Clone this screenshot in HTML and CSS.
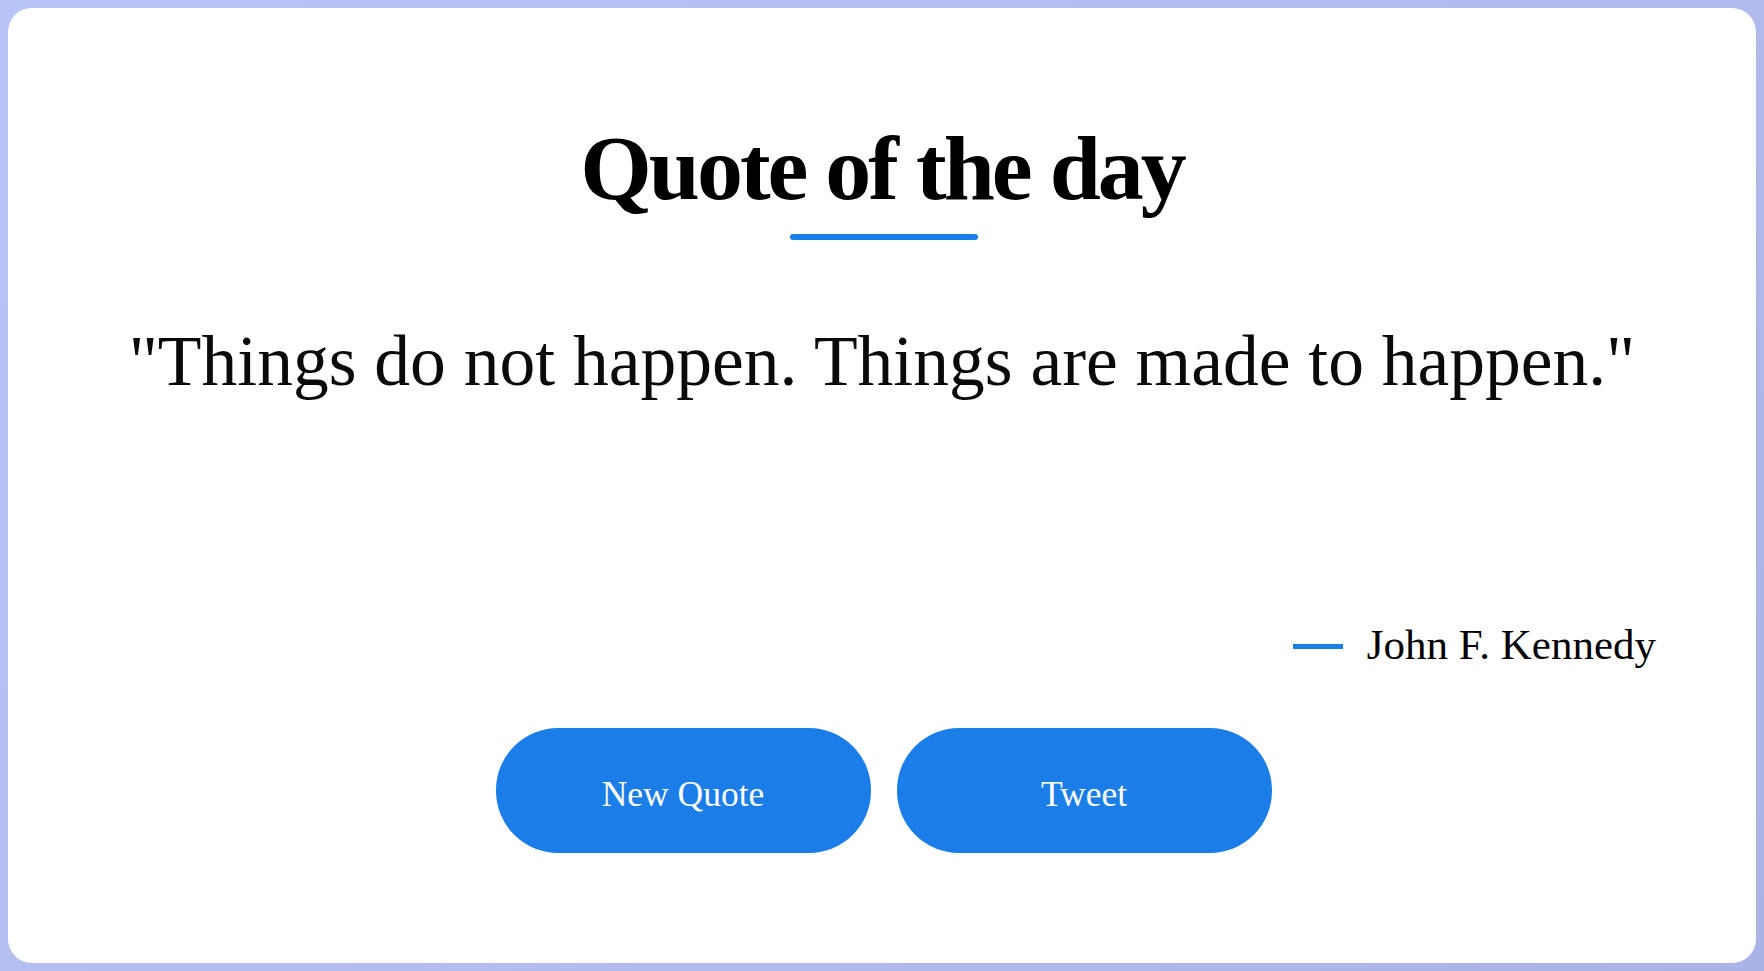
FILE: index.html
```html
<!DOCTYPE html>
<html lang="en">
<head>
<meta charset="utf-8">
<title>Quote of the day</title>
<link rel="stylesheet" href="styles.css">
</head>
<body>
<main class="card">
  <h1 class="title">Quote of the day</h1>
  <div class="rule"></div>
  <p class="quote">"Things do not happen. Things are made to happen."</p>
  <div class="author"><span class="dash"></span><span class="name">John F. Kennedy</span></div>
  <div class="actions">
    <button class="btn">New Quote</button>
    <button class="btn">Tweet</button>
  </div>
</main>
</body>
</html>
```

FILE: styles.css
```css
* { box-sizing: border-box; }
html {
  height: 100%;
  background: linear-gradient(135deg, #bac5f7 0%, #b2bcef 50%, #a9b3e5 100%);
}
body {
  margin: 8px;
  height: calc(100vh - 16px);
  font-family: "Liberation Serif", "Times New Roman", serif;
  color: #000;
}
.card {
  height: 100%;
  background: #fff;
  border-radius: 24px;
  padding: 114px 100px 0;
  display: flex;
  flex-direction: column;
  align-items: center;
}
.title {
  margin: 0;
  font-size: 92px;
  line-height: 92px;
  font-weight: 700;
  letter-spacing: -3px;
}
.rule {
  margin-top: 20px;
  margin-left: 3px;
  width: 188px;
  height: 6px;
  border-radius: 3px;
  background: #1b7ee8;
}
.quote {
  margin: 85px 0 0;
  font-size: 71.5px;
  line-height: 72px;
  color: #0a0a0a;
}
.author {
  margin-top: 227px;
  align-self: flex-end;
  display: flex;
  align-items: center;
  gap: 24px;
  height: 42px;
}
.dash {
  width: 50px;
  height: 5px;
  margin-top: 2px;
  background: #1b7ee8;
}
.name {
  font-size: 43px;
  line-height: 42px;
}
.actions {
  margin-top: 62px;
  margin-left: 3px;
  display: flex;
  gap: 26px;
}
.btn {
  width: 375px;
  height: 125px;
  border: none;
  border-radius: 62px;
  background: #1b7ee8;
  color: #fff;
  font-family: "Liberation Serif", "Times New Roman", serif;
  font-size: 35.5px;
  padding: 6px 0 0;
  cursor: pointer;
}
```
